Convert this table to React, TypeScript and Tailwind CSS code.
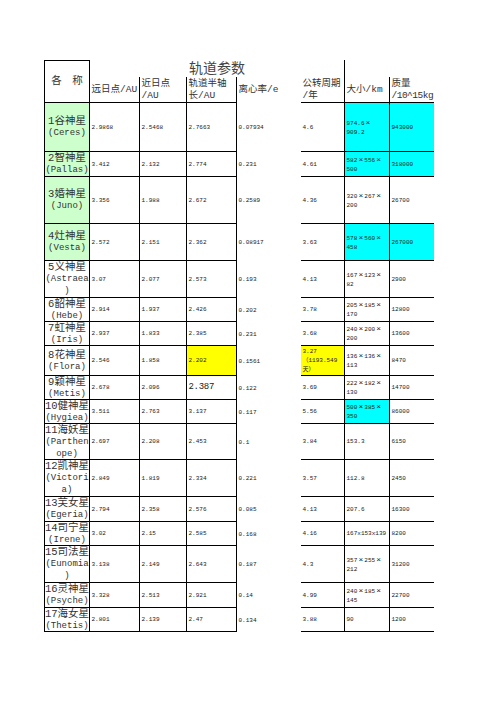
import clsx from "clsx"

type Row = {
  name: string
  latin: string[]
  green?: boolean
  aph: string
  per: string
  semi: string
  semiYellow?: boolean
  semiBig?: boolean
  ecc: string
  period: string[]
  periodYellow?: boolean
  size: string[]
  sizeCyan?: boolean
  mass: string
  massCyan?: boolean
}

const rows: Row[] = [
  { name: "1谷神星", latin: ["(Ceres)"], green: true, aph: "2.9868", per: "2.5468", semi: "2.7663", ecc: "0.07934", period: ["4.6"], size: ["974.6×", "909.2"], sizeCyan: true, mass: "943000", massCyan: true },
  { name: "2智神星", latin: ["(Pallas)"], green: true, aph: "3.412", per: "2.132", semi: "2.774", ecc: "0.231", period: ["4.61"], size: ["582×556×", "500"], sizeCyan: true, mass: "318000", massCyan: true },
  { name: "3婚神星", latin: ["(Juno)"], green: true, aph: "3.356", per: "1.988", semi: "2.672", ecc: "0.2589", period: ["4.36"], size: ["320×267×", "200"], mass: "26700" },
  { name: "4灶神星", latin: ["(Vesta)"], green: true, aph: "2.572", per: "2.151", semi: "2.362", ecc: "0.08917", period: ["3.63"], size: ["578×560×", "458"], sizeCyan: true, mass: "267000", massCyan: true },
  { name: "5义神星", latin: ["(Astraea", ")"], aph: "3.07", per: "2.077", semi: "2.573", ecc: "0.193", period: ["4.13"], size: ["167×123×", "82"], mass: "2900" },
  { name: "6韶神星", latin: ["(Hebe)"], aph: "2.914", per: "1.937", semi: "2.426", ecc: "0.202", period: ["3.78"], size: ["205×185×", "170"], mass: "12800" },
  { name: "7虹神星", latin: ["(Iris)"], aph: "2.937", per: "1.833", semi: "2.385", ecc: "0.231", period: ["3.68"], size: ["240×200×", "200"], mass: "13600" },
  { name: "8花神星", latin: ["(Flora)"], aph: "2.546", per: "1.858", semi: "2.202", semiYellow: true, ecc: "0.1561", period: ["3.27", "（1193.549", "天）"], periodYellow: true, size: ["136×136×", "113"], mass: "8470" },
  { name: "9颖神星", latin: ["(Metis)"], aph: "2.678", per: "2.096", semi: "2.387", semiBig: true, ecc: "0.122", period: ["3.69"], size: ["222×182×", "130"], mass: "14700" },
  { name: "10健神星", latin: ["(Hygiea)"], aph: "3.511", per: "2.763", semi: "3.137", ecc: "0.117", period: ["5.56"], size: ["500×385×", "350"], sizeCyan: true, mass: "86000" },
  { name: "11海妖星", latin: ["(Parthen", "ope)"], aph: "2.697", per: "2.208", semi: "2.453", ecc: "0.1", period: ["3.84"], size: ["153.3"], mass: "6150" },
  { name: "12凯神星", latin: ["(Victori", "a)"], aph: "2.849", per: "1.819", semi: "2.334", ecc: "0.221", period: ["3.57"], size: ["112.8"], mass: "2450" },
  { name: "13芙女星", latin: ["(Egeria)"], aph: "2.794", per: "2.358", semi: "2.576", ecc: "0.085", period: ["4.13"], size: ["207.6"], mass: "16300" },
  { name: "14司宁星", latin: ["(Irene)"], aph: "3.02", per: "2.15", semi: "2.585", ecc: "0.168", period: ["4.16"], size: ["167x153x139"], mass: "8200" },
  { name: "15司法星", latin: ["(Eunomia", ")"], aph: "3.138", per: "2.149", semi: "2.643", ecc: "0.187", period: ["4.3"], size: ["357×255×", "212"], mass: "31200" },
  { name: "16灵神星", latin: ["(Psyche)"], aph: "3.328", per: "2.513", semi: "2.921", ecc: "0.14", period: ["4.99"], size: ["240×185×", "145"], mass: "22700" },
  { name: "17海女星", latin: ["(Thetis)"], aph: "2.801", per: "2.139", semi: "2.47", ecc: "0.134", period: ["3.88"], size: ["90"], mass: "1200" },
]

// × is full width in the sheet, mono font makes it narrow
function Dims({ text }: { text: string }) {
  const parts = text.split("×")
  return (
    <span>
      {parts.map((p, i) => (
        <span key={i}>
          {p}
          {i < parts.length - 1 && <span className="inline-block w-[7px] text-center text-[8px] leading-[9px]">×</span>}
        </span>
      ))}
    </span>
  )
}

const num = "flex flex-col justify-center whitespace-nowrap pl-[1.5px] text-[6px] leading-[9px] text-[#222]"
const head = "flex flex-col justify-center whitespace-nowrap pl-[1.5px] text-[9.5px] leading-[12px] text-[#333]"

export default function App() {
  return (
    <div className="min-h-screen bg-white pt-[60px] pl-[44px] font-['Liberation_Mono','Noto_Sans_CJK_SC',monospace]">
      <div className="grid w-[390px] grid-cols-[46px_50px_47px_50px_64px_44px_45px_44px] grid-rows-[17px_26px_49px_25px_47px_37px_37px_24px_24px_30px_24px_24px_36px_37px_25px_24px_37px_25px_24px]">
        {/* header */}
        <div className="row-span-2 flex items-center justify-center border border-black text-[10.5px] text-[#333]">各　称</div>
        <div className="col-span-5 flex items-center justify-center border-r border-black pt-[1px] text-[14px] leading-none text-[#444]">轨道参数</div>
        <div className="col-span-2" />

        <div className={clsx(head, "border-r border-b border-black")}>远日点/AU</div>
        <div className={clsx(head, "border-r border-b border-black")}>
          <span>近日点</span>
          <span>/AU</span>
        </div>
        <div className={clsx(head, "border-r border-b border-black")}>
          <span>轨道半轴</span>
          <span>长/AU</span>
        </div>
        <div className={head}>离心率/e</div>
        <div className={clsx(head, "border-r border-b border-black")}>
          <span>公转周期</span>
          <span>/年</span>
        </div>
        <div className={clsx(head, "border-r border-b border-black")}>大小/km</div>
        <div className={clsx(head, "border-b border-black")}>
          <span>质量</span>
          <span className="tracking-[-0.5px]">/10^15kg</span>
        </div>

        {rows.map((r) => (
          <Line key={r.name} r={r} />
        ))}
      </div>
    </div>
  )
}

function Line({ r }: { r: Row }) {
  return (
    <>
      <div
        className={clsx(
          "flex flex-col items-center justify-center whitespace-nowrap border-l border-r border-b border-black leading-[12px] text-[#333]",
          r.green && "bg-[#ccffcc]"
        )}
      >
        <span className="text-[10.5px]">{r.name}</span>
        {r.latin.map((l) => (
          <span key={l} className="text-[9px]">
            {l}
          </span>
        ))}
      </div>
      <div className={clsx(num, "border-r border-b border-black")}>{r.aph}</div>
      <div className={clsx(num, "border-r border-b border-black")}>{r.per}</div>
      <div className={clsx(num, "border-r border-b border-black", r.semiYellow && "bg-[#ffff00]")}>
        {r.semiBig ? <span className="text-[9px] tracking-[-0.3px]">{r.semi}</span> : r.semi}
      </div>
      <div className={num}>{r.ecc}</div>
      <div className={clsx(num, "border-r border-b border-black", r.periodYellow && "bg-[#ffff00]")}>
        {r.period.map((p) => (
          <span key={p}>{p}</span>
        ))}
      </div>
      <div className={clsx(num, "border-r border-b border-black", r.sizeCyan && "bg-[#00ffff]")}>
        {r.size.map((s) => (
          <Dims key={s} text={s} />
        ))}
      </div>
      <div className={clsx(num, "border-b border-black", r.massCyan && "bg-[#00ffff]")}>{r.mass}</div>
    </>
  )
}
